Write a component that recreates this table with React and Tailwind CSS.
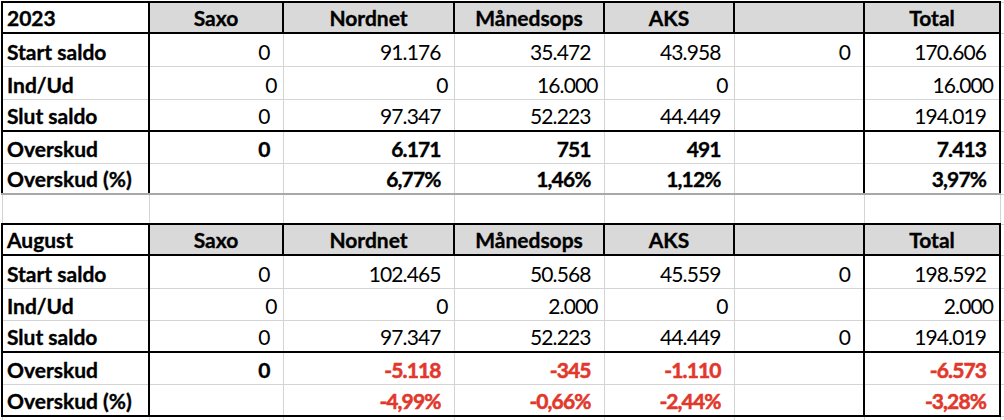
import React from "react";

const colWidths = ["w-[147px]", "w-[134px]", "w-[171px]", "w-[150px]", "w-[130px]", "w-[130px]", "w-[136px]", "w-[20px]"];
const cols = ["Saxo", "Nordnet", "Månedsops", "AKS", "", "Total"];

const sections = [
  {
    title: "2023",
    heights: ["h-[31px]", "h-[33px]", "h-[33px]", "h-[32px]", "h-[32px]", "h-[31px]"],
    last: "border-b-2 border-b-[#a8a8a8]",
    rows: [
      { label: "Start saldo", values: ["0", "91.176", "35.472", "43.958", "0", "170.606"] },
      { label: "Ind/Ud", tight: true, values: ["0", "0", "16.000", "0", "", "16.000"] },
      { label: "Slut saldo", values: ["0", "97.347", "52.223", "44.449", "", "194.019"] },
      { label: "Overskud", bold: true, values: ["0", "6.171", "751", "491", "", "7.413"] },
      { label: "Overskud (%)", bold: true, values: ["", "6,77%", "1,46%", "1,12%", "", "3,97%"] },
    ],
  },
  {
    title: "August",
    heights: ["h-[31px]", "h-[33px]", "h-[32px]", "h-[32px]", "h-[32px]", "h-[32px]"],
    last: "border-b-2 border-b-black",
    rows: [
      { label: "Start saldo", values: ["0", "102.465", "50.568", "45.559", "0", "198.592"] },
      { label: "Ind/Ud", tight: true, values: ["0", "0", "2.000", "0", "", "2.000"] },
      { label: "Slut saldo", values: ["0", "97.347", "52.223", "44.449", "0", "194.019"] },
      { label: "Overskud", bold: true, red: true, values: ["0", "-5.118", "-345", "-1.110", "", "-6.573"] },
      { label: "Overskud (%)", bold: true, red: true, values: ["", "-4,99%", "-0,66%", "-2,44%", "", "-3,28%"] },
    ],
  },
];

// excel-ish cell: bottom aligned text, light grid lines
const cell = "border border-[#d4d4d4] align-bottom pb-[2px] leading-[24px] whitespace-nowrap overflow-hidden";
const heavy = "font-bold [-webkit-text-stroke:0.35px_currentColor]";
const heavyRed = "font-bold [-webkit-text-stroke:0.55px_currentColor] text-[#e2382c]";

function Section({ section }) {
  return (
    <>
      <tr>
        <td className={`${cell} ${section.heights[0]} ${heavy} border-2 border-black bg-white pl-[4px] text-left`}>
          {section.title}
        </td>
        {cols.map((c, i) => (
          <td key={i} className={`${cell} ${heavy} border-2 border-black bg-[#d9d9d9] text-center`}>
            {c}
          </td>
        ))}
        <td className={cell}></td>
      </tr>
      {section.rows.map((row, r) => {
        const edge = r === 3 ? "border-t-2 border-t-black" : "";
        const bottom = r === section.rows.length - 1 ? section.last : "";
        return (
          <tr key={row.label}>
            <td
              className={`${cell} ${section.heights[r + 1]} ${edge} ${bottom} ${heavy} border-l-2 border-l-black border-r-2 border-r-black pl-[4px]`}
            >
              {row.label}
            </td>
            {row.values.map((v, i) => {
              const isRed = row.red && i > 0;
              const weight = isRed ? heavyRed : row.bold ? heavy : "text-black";
              return (
                <td
                  key={i}
                  className={`${cell} ${edge} ${bottom} ${weight} text-right tracking-[-0.9px] ${
                    row.tight ? "pr-[6px]" : "pr-[13px]"
                  } ${i === 5 ? "border-l-2 border-l-black border-r-2 border-r-black" : ""}`}
                >
                  {v}
                </td>
              );
            })}
            <td className={cell}></td>
          </tr>
        );
      })}
    </>
  );
}

function EmptyRow({ height }) {
  return (
    <tr>
      {colWidths.map((w, i) => (
        <td key={i} className={`${cell} ${height}`}></td>
      ))}
    </tr>
  );
}

export default function App() {
  return (
    <div className="w-[1004px] h-[420px] overflow-hidden bg-white pl-px pt-px">
      <table className="w-[1018px] table-fixed border-collapse text-[21px] text-black font-['Lato',sans-serif]">
        <colgroup>
          {colWidths.map((w, i) => (
            <col key={i} className={w} />
          ))}
        </colgroup>
        <tbody>
          <Section section={sections[0]} />
          <EmptyRow height="h-[30px]" />
          <Section section={sections[1]} />
          <EmptyRow height="h-[32px]" />
        </tbody>
      </table>
    </div>
  );
}
